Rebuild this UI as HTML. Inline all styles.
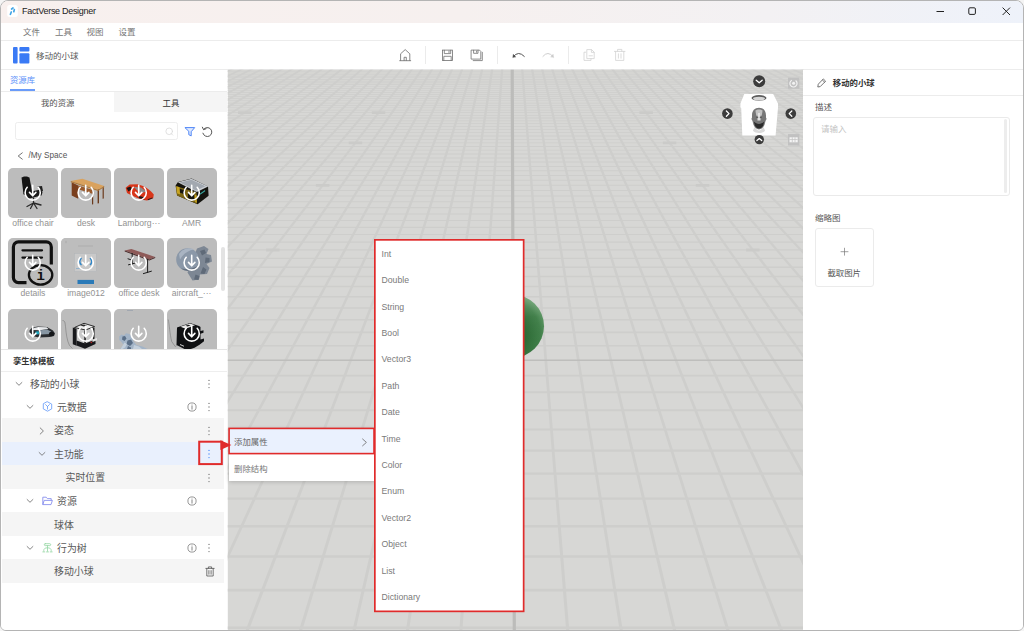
<!DOCTYPE html>
<html lang="zh-CN">
<head>
<meta charset="utf-8">
<title>FactVerse Designer</title>
<style>
html,body{margin:0;padding:0;}
body{width:1024px;height:631px;overflow:hidden;background:#f4f4f4;font-family:"Liberation Sans","Noto Sans CJK SC",sans-serif;color:#555;}
#win{position:absolute;left:0;top:0;width:1024px;height:631px;box-sizing:border-box;border:1px solid #b4b4b4;border-radius:8px 8px 6px 6px;background:#fff;overflow:hidden;}
#app{position:absolute;left:-1px;top:-1px;width:1024px;height:631px;}
.abs{position:absolute;}
.t{position:absolute;white-space:nowrap;line-height:1;}
svg{position:absolute;overflow:visible;}
/* title bar */
#titlebar{left:0;top:0;width:1024px;height:23px;background:linear-gradient(90deg,#f8f0ee 0%,#f6f0ef 45%,#f3f1f3 75%,#eef2fa 100%);}
#title{left:22px;top:7.300px;font-size:9px;color:#222;letter-spacing:-0.300px;}
/* menu */
#menubar{left:0;top:23px;width:1024px;height:17px;background:#fff;border-bottom:1px solid #ececec;}
.menu{top:28px;font-size:8.5px;color:#767676;}
/* toolbar */
#toolbar{left:0;top:41px;width:1024px;height:28px;background:#fff;border-bottom:1px solid #ececec;}
.sep{position:absolute;top:46px;width:1px;height:18px;background:#ebebeb;}
/* left */
#left{left:0;top:70px;width:227px;height:561px;background:#fff;}
.hline{position:absolute;height:1px;background:#ececec;}
.thumb{position:absolute;width:50px;height:50px;border-radius:5px;background:#bcbcbc;overflow:hidden;}
.thumb svg{left:0;top:0;}
.lab{position:absolute;width:60px;text-align:center;font-size:8.6px;color:#929292;line-height:10px;white-space:nowrap;}
.row{position:absolute;left:2px;width:222px;height:23.5px;}
.row.g{background:#f5f5f5;}
.row.b{background:#e9f0fd;}
.tt{position:absolute;font-size:9.9px;color:#595959;line-height:12px;white-space:nowrap;}
/* right */
#right{left:803px;top:70px;width:221px;height:561px;background:#fff;}
/* menus */
.mi{position:absolute;left:381.5px;font-size:8.7px;color:#7a7a7a;line-height:10px;white-space:nowrap;}
</style>
</head>
<body>
<div id="win"><div id="app">

<!-- title bar -->
<div id="titlebar" class="abs"></div>
<svg style="left:7px;top:5px" width="12" height="13" viewBox="0 0 12 13"><rect x="0.200" y="0" width="10.600" height="12" rx="2.500" fill="#fff"/><path d="M3.400 9.300l.9-2.300M4.600 4l1.400-1M7.300 4.600l-.5 2.100" stroke="#44a6e6" stroke-width="1.700" stroke-linecap="round" fill="none"/></svg>
<div id="title" class="t">FactVerse Designer</div>
<svg style="left:936px;top:6px" width="80" height="12" viewBox="0 0 80 12"><path d="M0.5 5.5h7.5" stroke="#222" stroke-width="1" fill="none"/><rect x="32.8" y="1.8" width="6.6" height="6.6" rx="1.2" stroke="#222" stroke-width="1" fill="none"/><path d="M66.6 1.6l7.4 7.4M74 1.6l-7.4 7.4" stroke="#222" stroke-width="1" fill="none"/></svg>

<!-- menu bar -->
<div id="menubar" class="abs"></div>
<div class="t menu" style="left:23px">文件</div>
<div class="t menu" style="left:55px">工具</div>
<div class="t menu" style="left:86.5px">视图</div>
<div class="t menu" style="left:118.5px">设置</div>

<!-- toolbar -->
<div id="toolbar" class="abs"></div>
<svg style="left:13px;top:46.5px" width="17" height="17" viewBox="0 0 17 17"><rect x="0" y="0" width="4.6" height="16.5" rx="1" fill="#3a7af5"/><rect x="6.4" y="0" width="10" height="4.4" rx="1" fill="#3a7af5"/><rect x="6.4" y="6.2" width="10" height="10.3" rx="1" fill="#3a7af5"/></svg>
<div class="t" style="left:36px;top:51.6px;font-size:8.5px;color:#5a5a5a">移动的小球</div>
<div class="sep" style="left:425px"></div>
<div class="sep" style="left:496.5px"></div>
<div class="sep" style="left:567.5px"></div>
<svg style="left:398px;top:48px" width="232" height="14" viewBox="0 0 232 14" fill="none" stroke-linecap="round" stroke-linejoin="round">
<!-- home -->
<g stroke="#6a6a6a" stroke-width="0.8"><path d="M2.600 12.400V5.800L7.200 1.600l4.600 4.200v6.600M1.700 12.700h11M6.100 12.400V9.300h2.200v3.100"/></g>
<!-- save -->
<g stroke="#707070" stroke-width="0.8" stroke-linejoin="miter"><rect x="44.500" y="2.100" width="10" height="10.400"/><path d="M46.300 2.300v3.300h6.400V2.300M51 3v1.600M45.800 12.400V8.300h7.400v4.100"/></g>
<!-- save as -->
<g stroke="#707070" stroke-width="0.8" stroke-linejoin="miter"><path d="M73.500 2.100h8l1.300 1.300v7.700h-9.300z"/><path d="M75.600 2.300v3h4.400v-3M78.600 3v1.300M75.200 12.600h9.100V4.300" /></g>
<!-- undo -->
<g stroke="#4a4a4a" stroke-width="0.95"><path d="M115.400 8.600Q120.400 2.200 126.300 8.400"/><path d="M114.800 9.300l.5-3 2.300 2.500z" fill="#4a4a4a" stroke-width="0.400"/></g>
<!-- redo -->
<g stroke="#cbcbcb" stroke-width="0.95"><path d="M155 8.600Q150 2.200 144.900 8.400"/><path d="M155.600 9.300l-.5-3-2.300 2.500z" fill="#cbcbcb" stroke-width="0.400"/></g>
<!-- copy -->
<g stroke="#d2d2d2" stroke-width="0.8"><path d="M189.200 1.600h4.400l2.600 2.600v6.400h-7z"/><path d="M193.400 1.800v2.600h2.600"/><path d="M187.800 4.200h-1.800v8.200h7v-1.600"/><path d="M191 7.800h3.400"/></g>
<!-- trash -->
<g stroke="#d2d2d2" stroke-width="0.8"><path d="M216.400 3.400h10.600M219.600 3.200V1.400h4.200v1.800M217.600 3.600v8.800h8.200V3.600M220.400 5.800v4.400M223 5.800v4.400"/></g>
</svg>


<!-- viewport -->
<svg style="left:0;top:0" width="1024" height="631" viewBox="0 0 1024 631">
<defs>
<clipPath id="vp"><rect x="227.800" y="69.700" width="575.500" height="562"/></clipPath>
<radialGradient id="sph" cx="0.40" cy="0.62" r="0.66"><stop offset="0" stop-color="#1f5a29"/><stop offset="0.5" stop-color="#2b6a34"/><stop offset="0.82" stop-color="#3c7c45"/><stop offset="1" stop-color="#5a9561"/></radialGradient><linearGradient id="sph2" x1="0" y1="0" x2="0" y2="1"><stop offset="0" stop-color="#fff" stop-opacity="0.22"/><stop offset="0.35" stop-color="#fff" stop-opacity="0.04"/><stop offset="1" stop-color="#fff" stop-opacity="0"/></linearGradient>
</defs>
<g clip-path="url(#vp)">
<rect x="227" y="69" width="577" height="563" fill="#d7d7d5"/>
<path d="M227 626.4h577v2.7h-577zM227 588.8h577v2.7h-577zM227 555.2h577v2.6h-577zM227 524.9h577v2.5h-577zM227 497.4h577v2.4h-577zM227 472.4h577v2.3h-577zM227 449.5h577v2.2h-577zM227 428.5h577v2.1h-577zM227 409.2h577v2h-577zM227 391.3h577v1.9h-577zM227 374.7h577v1.8h-577zM227 344.9h577v1.7h-577zM227 331.5h577v1.7h-577zM227 319h577v1.6h-577zM227 307.2h577v1.6h-577zM227 296.1h577v1.5h-577zM227 285.7h577v1.5h-577zM227 275.8h577v1.4h-577zM227 266.5h577v1.4h-577zM227 257.7h577v1.3h-577zM227 249.3h577v1.3h-577zM227 241.4h577v1.3h-577zM227 233.9h577v1.2h-577zM227 226.7h577v1.2h-577zM227 219.9h577v1.2h-577zM227 213.4h577v1.2h-577zM227 207.1h577v1.1h-577zM227 201.2h577v1.1h-577zM227 195.5h577v1.1h-577zM227 190h577v1.1h-577zM227 184.8h577v1h-577zM227 179.8h577v1h-577zM227 175h577v1h-577zM227 170.3h577v1h-577zM227 165.9h577v1h-577zM227 161.6h577v0.9h-577zM227 157.5h577v0.9h-577zM227 153.5h577v0.9h-577zM227 149.7h577v0.9h-577zM227 146h577v0.9h-577zM227 142.4h577v0.9h-577zM227 138.9h577v0.8h-577zM227 135.6h577v0.8h-577zM227 132.3h577v0.8h-577zM227 129.2h577v0.8h-577zM227 126.2h577v0.8h-577zM227 123.2h577v0.8h-577zM227 120.4h577v0.8h-577zM227 117.6h577v0.8h-577zM227 115h577v0.7h-577zM227 112.3h577v0.7h-577zM227 109.8h577v0.7h-577zM227 107.4h577v0.7h-577zM227 105h577v0.7h-577zM227 102.7h577v0.7h-577zM227 100.4h577v0.7h-577zM227 98.2h577v0.7h-577zM227 96.1h577v0.7h-577zM227 94h577v0.7h-577zM227 92h577v0.7h-577zM227 90h577v0.6h-577zM227 88.1h577v0.6h-577zM227 86.2h577v0.6h-577zM227 84.3h577v0.6h-577zM227 82.6h577v0.6h-577zM227 80.8h577v0.6h-577zM227 79.1h577v0.6h-577zM227 77.4h577v0.6h-577zM227 75.8h577v0.6h-577zM227 74.2h577v0.6h-577zM227 72.7h577v0.6h-577zM227 71.2h577v0.6h-577zM227 69.7h577v0.6h-577zM227 68.2h577v0.6h-577z" fill="#cececc"/>
<path d="M230.4 69L234.2 69L-982.6 632L-987.8 632zM240.4 69L244.2 69L-929.1 632L-934.2 632zM250.4 69L254.1 69L-875.6 632L-880.6 632zM260.5 69L264.1 69L-822.1 632L-827 632zM270.5 69L274.1 69L-768.6 632L-773.4 632zM280.5 69L284 69L-715.1 632L-719.8 632zM290.5 69L294 69L-661.6 632L-666.2 632zM300.6 69L304 69L-608.1 632L-612.6 632zM310.6 69L313.9 69L-554.6 632L-559 632zM320.6 69L323.9 69L-501.1 632L-505.4 632zM330.7 69L333.8 69L-447.5 632L-451.8 632zM340.7 69L343.8 69L-394 632L-398.2 632zM350.7 69L353.8 69L-340.5 632L-344.6 632zM360.8 69L363.7 69L-287 632L-291 632zM370.8 69L373.7 69L-233.5 632L-237.4 632zM380.8 69L383.7 69L-180 632L-183.8 632zM390.9 69L393.6 69L-126.5 632L-130.2 632zM400.9 69L403.6 69L-73 632L-76.6 632zM410.9 69L413.5 69L-19.5 632L-23 632zM420.9 69L423.5 69L34.1 632L30.6 632zM431 69L433.5 69L87.6 632L84.2 632zM441 69L443.5 69L141.1 632L137.8 632zM451 69L453.4 69L194.6 632L191.4 632zM461 69L463.4 69L248.2 632L244.9 632zM471 69L473.4 69L301.7 632L298.5 632zM481 69L483.4 69L355.2 632L352.1 632zM491 69L493.4 69L408.8 632L405.7 632zM501 69L503.3 69L462.3 632L459.2 632zM521 69L523.3 69L569.4 632L566.3 632zM531 69L533.3 69L623 632L619.9 632zM541 69L543.3 69L676.6 632L673.4 632zM551 69L553.4 69L730.1 632L727 632zM561 69L563.4 69L783.7 632L780.5 632zM570.9 69L573.4 69L837.3 632L834 632zM580.9 69L583.4 69L890.9 632L887.5 632zM590.9 69L593.4 69L944.5 632L941.1 632zM600.9 69L603.4 69L998.1 632L994.6 632zM610.8 69L613.5 69L1051.7 632L1048.1 632zM620.8 69L623.5 69L1105.3 632L1101.6 632zM630.8 69L633.5 69L1158.9 632L1155.1 632zM640.7 69L643.6 69L1212.5 632L1208.6 632zM650.7 69L653.6 69L1266.1 632L1262.2 632zM660.6 69L663.6 69L1319.7 632L1315.7 632zM670.6 69L673.6 69L1373.3 632L1369.2 632zM680.6 69L683.7 69L1426.9 632L1422.7 632zM690.5 69L693.7 69L1480.5 632L1476.2 632zM700.5 69L703.7 69L1534.1 632L1529.7 632zM710.5 69L713.8 69L1587.7 632L1583.2 632zM720.4 69L723.8 69L1641.3 632L1636.7 632zM730.4 69L733.8 69L1694.9 632L1690.2 632zM740.3 69L743.9 69L1748.5 632L1743.7 632zM750.3 69L753.9 69L1802.1 632L1797.2 632zM760.3 69L763.9 69L1855.7 632L1850.8 632zM770.2 69L774 69L1909.3 632L1904.3 632zM780.2 69L784 69L1962.9 632L1957.8 632zM790.1 69L794 69L2016.5 632L2011.3 632zM800.1 69L804 69L2070.1 632L2064.8 632z" fill="#cececc"/>
<path d="M238 111.3h13.500v2.800h-13.500zM266.1 248.6h13.500v2.800h-13.500zM315.9 183.9h13.500v2.800h-13.500zM348.7 141.4h13.500v2.800h-13.500zM371.8 111.3h13.500v2.800h-13.500zM746.1 248.6h13.500v2.800h-13.500zM695.8 183.9h13.500v2.800h-13.500zM662.8 141.4h13.500v2.800h-13.500zM639.4 111.3h13.500v2.800h-13.500zM773.2 111.3h13.500v2.800h-13.500z" fill="#cbcbc9"/>
<path d="M227 360.2H804" stroke="#bebebc" stroke-width="1.6" fill="none"/>
<path d="M512.2 69L514.3 632" stroke="#bcbcba" stroke-width="3.2" fill="none"/>
<circle cx="512.4" cy="326.200" r="31.600" fill="url(#sph)"/><circle cx="512.4" cy="326.200" r="31.600" fill="url(#sph2)"/>
</g>
</svg>
<svg style="left:715px;top:68px" width="95" height="84" viewBox="715 68 95 84">
<polygon points="740.4,103.500 744.300,94 773.200,94 778,103.500 778,108 775.600,135.500 742.300,135.500 741.200,108 740.400,107.500" fill="#fff"/>
<ellipse cx="759" cy="97.900" rx="7.500" ry="2.800" fill="#5c5c5c"/>
<ellipse cx="759" cy="98.600" rx="6" ry="1.900" fill="#d6d6d6"/>
<path d="M754.500 127c1.500 2.400 3 3.400 4.500 3.400s3-1 4.500-3.400l1.600 3.800c-1.500 1.600-3.600 2.200-6.100 2.200s-4.600-.6-6.100-2.200z" fill="#dadada"/>
<path d="M759 107.800c4.400 0 7 3 7 7.600v2.400c.7.200.7 2.200-.4 3l-1 3.800c-.8 2.600-3 4.800-5.600 4.800s-4.800-2.200-5.600-4.800l-1-3.800c-1.100-.8-1.100-2.800-.4-3v-2.400c0-4.600 2.600-7.600 7-7.600z" fill="#777"/>
<path d="M755.400 110.600c1.600-1.500 5.600-1.500 7.200 0l-.9 5.200h-5.400z" fill="#c2c2c2"/>
<path d="M758 113h2l.6 7.600h-3.200z" fill="#e2e2e2"/>
<path d="M753.800 121.600c1.500 1.500 3.400 2.300 5.200 2.300s3.700-.8 5.200-2.300l-1 3.900c-1 1.800-2.500 3-4.200 3s-3.200-1.200-4.200-3z" fill="#2c2c2c"/>
<path d="M756.400 117.400h1.800M759.800 117.400h1.800" stroke="#3a3a3a" stroke-width="0.700"/>
<g fill="#3c3c3c"><circle cx="759.200" cy="81.300" r="6"/><circle cx="727.400" cy="113.600" r="5.300"/><circle cx="790.800" cy="113.600" r="5.300"/><circle cx="759.300" cy="139.600" r="4.700"/></g>
<g fill="none" stroke="#fff" stroke-width="1.300" stroke-linecap="round" stroke-linejoin="round"><path d="M756.200 80.200l3 2.600 3-2.600"/><path d="M726.400 111l2.600 2.600-2.600 2.600"/><path d="M791.800 111l-2.600 2.600 2.600 2.600"/><path d="M756.900 140.600l2.400-2 2.400 2"/></g>
<rect x="788" y="77.700" width="11.300" height="11" fill="#c1c1c1"/>
<g fill="none" stroke="#f2f2f2" stroke-width="1.200"><path d="M795.600 80.500a3.600 3.600 0 1 1 -3.800-.3"/></g><circle cx="793.600" cy="83.300" r="1.500" fill="#f2f2f2"/>
<rect x="788" y="134.100" width="11.300" height="11.400" fill="#c1c1c1"/>
<rect x="789.500" y="137.300" width="8.200" height="5" fill="#f4f4f4"/>
<path d="M792.300 137.300v5M795 137.300v5M789.500 139.500h8.200" stroke="#c1c1c1" stroke-width="0.700" fill="none"/>
</svg>


<!-- left panel -->
<div id="left" class="abs"></div>
<div class="t" style="left:10px;top:75.500px;font-size:8.400px;color:#5b8ff9">资源库</div>
<div class="abs" style="left:10px;top:89px;width:25.200px;height:1.500px;background:#6a9bf9"></div>
<div class="hline" style="left:0;top:91px;width:227px"></div>
<div class="abs" style="left:114px;top:92px;width:113px;height:20px;background:#f5f5f5"></div>
<div class="t" style="left:41px;top:99.300px;font-size:8.400px;color:#555">我的资源</div>
<div class="t" style="left:162.600px;top:99.300px;font-size:8.400px;color:#333">工具</div>
<div class="abs" style="left:14.800px;top:121.800px;width:161px;height:16px;border:1px solid #ededed;border-radius:2.500px;box-sizing:content-box"></div>
<svg style="left:164px;top:126px" width="50" height="12" viewBox="164 126 50 12" fill="none" stroke-linecap="round" stroke-linejoin="round"><g stroke="#d9d9d9" stroke-width="0.800"><circle cx="169.200" cy="131.300" r="3.300"/><path d="M171.200 133.600l1.500 1.500"/></g><path d="M185.300 127.600h9.400l-3.500 4.100v4.200l-2.400-1.200v-3z" stroke="#4f86f7" stroke-width="1" fill="#dfe9fe"/><path d="M203.600 129.400a4.500 4.500 0 1 1 -0.700 3.800M202.400 127.200l1.100 2.400 2.500-0.800" stroke="#555" stroke-width="1"/></svg>
<svg style="left:17px;top:150.500px" width="8" height="10" viewBox="0 0 8 10" fill="none"><path d="M5.600 1.600L1.200 5l4.400 3.400" stroke="#666" stroke-width="0.900"/></svg>
<div class="t" style="left:28.500px;top:151.600px;font-size:8.200px;color:#555">/My Space</div>
<div class="thumb" style="left:8px;top:168px;height:50px;border-radius:5px"><svg width="50" height="50" viewBox="0 0 50 50"><path d="M13.500 9.500c2-1.500 6-1.500 8 0l2.600 14-1.600 2.500-7 .5z" fill="#141414"/><path d="M15.500 25l15-3c2 0 3.500 1 4 2.500l-1 3-14 3.500z" fill="#1a1a1a"/><path d="M29.500 18.500l4.500-.5 1 5-2 1z" fill="#222"/><path d="M25.500 30v5M25.500 35l-6.500 3.500M25.500 35l7.500 2M25.500 35l-3 5.500M25.500 35l3.500 5.500" stroke="#2a2a2a" stroke-width="1.300" fill="none" stroke-linecap="round"/><g fill="none" stroke="#fff" stroke-width="1.600" stroke-linecap="round" stroke-linejoin="round"><path d="M19.200 19.300a7.600 7.600 0 1 0 11 0"/><path d="M24.700 17.400v10.200M21.500 24.400l3.200 3.400 3.200-3.400"/></g></svg></div>
<div class="lab" style="left:3px;top:218px">office chair</div>
<div class="thumb" style="left:61px;top:168px;height:50px;border-radius:5px"><svg width="50" height="50" viewBox="0 0 50 50"><path d="M9.800 13l11.600-2.300 21.800 7.300-6.200 3.800z" fill="#d9a25e"/><path d="M10.700 14.200l6.500 3.200v13.400l-6.500-3.400z" fill="#7a3f1e"/><path d="M17.200 17.400l14 4.400v4l-14-4.600z" fill="#9a5a2c"/><path d="M36.600 21.800l1.400-.6v14l-1.400.4zM41.600 19.200l1.200-.6v11.800l-1.200.4zM31 22v14.600l1.200-.4V22.400z" fill="#6b3a1c"/><path d="M9.800 13l27.200 8.800 6.200-3.800v1.200l-6.200 3.800-27.200-8.800z" fill="#b07a3c"/><g fill="none" stroke="#fff" stroke-width="1.600" stroke-linecap="round" stroke-linejoin="round"><path d="M19.200 19.300a7.600 7.600 0 1 0 11 0"/><path d="M24.700 17.400v10.200M21.500 24.400l3.200 3.400 3.200-3.400"/></g></svg></div>
<div class="lab" style="left:56px;top:218px">desk</div>
<div class="thumb" style="left:114px;top:168px;height:50px;border-radius:5px"><svg width="50" height="50" viewBox="0 0 50 50"><path d="M11.600 19.800L15.600 16.600 23.500 16.200C30 17.600 36 21.500 39.800 26.400L39.200 30.200 33 32.600C27 32 20 29 13 25z" fill="#d8361a"/><path d="M19.500 18.800l7.500.6 5.200 4.200-5.800 1.800z" fill="#8c8c8c"/><path d="M12.500 20l3.800-1.600 1.800 2.400-3.600 2.600zM23.500 27.600l5.800 1.400 1.400 2.400-5.400-1.200z" fill="#1d1414"/><path d="M33.500 31.200l4.800-1.800.5.900-4.700 2z" fill="#2a1a1a"/><g fill="none" stroke="#fff" stroke-width="1.600" stroke-linecap="round" stroke-linejoin="round"><path d="M19.200 19.300a7.600 7.600 0 1 0 11 0"/><path d="M24.700 17.400v10.200M21.500 24.400l3.200 3.400 3.200-3.400"/></g></svg></div>
<div class="lab" style="left:109px;top:218px">Lamborg···</div>
<div class="thumb" style="left:166.6px;top:168px;height:50px;border-radius:5px"><svg width="50" height="50" viewBox="0 0 50 50"><path d="M8.600 17.600l2.400-3.600 13.600-3.400 16.400 7.800.6 9.400-11 8.400-20.400-8.600z" fill="#15140f"/><path d="M8.800 18l20.800 6.600.4 11.200-20-8.400z" fill="#7a6414"/><path d="M12 20.500l6 2v4l-6-2.200zM21 25l6 2v5.500l-6-2.500z" fill="#17160f"/><path d="M9.400 18.300l3.200 1 .5 7.300-3.200-1.300zM28 26.800l1.600.6.300 7.400-1.800-.8z" fill="#c7a422"/><path d="M10.800 14.200l13.800-3.400 16.600 7.800-11.400 5.400z" fill="#c9cdd2"/><path d="M13 14.400l11.400-2.700 14 6.600-9.400 4.300z" fill="#a2a8b0"/><path d="M33 25.500l5-3.400.2 1.200-5 3.500z" fill="#3aa7a0"/><g fill="none" stroke="#fff" stroke-width="1.600" stroke-linecap="round" stroke-linejoin="round"><path d="M19.200 19.300a7.600 7.600 0 1 0 11 0"/><path d="M24.700 17.400v10.200M21.500 24.400l3.200 3.400 3.200-3.400"/></g></svg></div>
<div class="lab" style="left:161.6px;top:218px">AMR</div>
<div class="thumb" style="left:8px;top:238px;height:50px;border-radius:5px"><svg width="50" height="50" viewBox="0 0 50 50"><path d="M18.500 44.600H10.400a5 5 0 0 1 -5-5V8.900a5 5 0 0 1 5-5H38.300a5 5 0 0 1 5 5V26.500" fill="none" stroke="#111" stroke-width="3.200" stroke-linecap="butt"/><path d="M14.500 12.300h19.500M14.500 19.600h19.500" stroke="#111" stroke-width="2.300" stroke-linecap="round"/><ellipse cx="32.600" cy="36.900" rx="11.700" ry="9.700" fill="#bcbcbc" stroke="#111" stroke-width="2.300"/><text x="32.600" y="42" text-anchor="middle" font-family="Liberation Mono, monospace" font-weight="700" font-size="14" fill="#111">i</text><g fill="none" stroke="#fff" stroke-width="1.600" stroke-linecap="round" stroke-linejoin="round"><path d="M19.200 19.300a7.600 7.600 0 1 0 11 0"/><path d="M24.700 17.400v10.200M21.500 24.400l3.200 3.400 3.200-3.400"/></g></svg></div>
<div class="lab" style="left:3px;top:288.3px">details</div>
<div class="thumb" style="left:61px;top:238px;height:50px;border-radius:5px"><svg width="50" height="50" viewBox="0 0 50 50"><rect x="0" y="0" width="50" height="50" fill="#bdbdbd"/><rect x="13.600" y="15.600" width="21.600" height="17.800" fill="#c9c9c9" stroke="#b0b4b8" stroke-width="0.400"/><path d="M20.500 20c-2.200 2-2.400 5 0 7M29 20c2.200 2 2.400 5 0 7" stroke="#2f86c8" stroke-width="1.400" fill="none"/><rect x="16.500" y="41.900" width="16.500" height="4.100" fill="#2a7ab8"/><rect x="17" y="7.600" width="15" height="0.800" fill="#aaa"/><rect x="4.500" y="2.800" width="1" height="2.400" fill="#aaa"/><rect x="15" y="30" width="5" height="0.700" fill="#7aa6cc"/><g fill="none" stroke="#fff" stroke-width="1.600" stroke-linecap="round" stroke-linejoin="round"><path d="M19.200 19.300a7.600 7.600 0 1 0 11 0"/><path d="M24.700 17.400v10.200M21.500 24.400l3.200 3.400 3.200-3.400"/></g></svg></div>
<div class="lab" style="left:56px;top:288.3px">image012</div>
<div class="thumb" style="left:114px;top:238px;height:50px;border-radius:5px"><svg width="50" height="50" viewBox="0 0 50 50"><path d="M10.700 12.400l6.700-1.500 23.800 8-5.900 2.500z" fill="#8e5a58"/><path d="M10.700 12.400l24.600 9 5.900-2.500v1.100l-5.900 2.600-24.600-9z" fill="#4a2a2a"/><path d="M18.200 15.400v10.800M33.600 21.200v13.200M14.500 26.800l7 -1.800M29.400 35.600l8-2.400M17.600 22l-3.600-1.200" stroke="#1d1d1d" stroke-width="1" fill="none" stroke-linecap="round"/><g fill="none" stroke="#fff" stroke-width="1.600" stroke-linecap="round" stroke-linejoin="round"><path d="M19.200 19.300a7.600 7.600 0 1 0 11 0"/><path d="M24.700 17.400v10.200M21.500 24.400l3.200 3.400 3.200-3.400"/></g></svg></div>
<div class="lab" style="left:109px;top:288.3px">office desk</div>
<div class="thumb" style="left:166.6px;top:238px;height:50px;border-radius:5px"><svg width="50" height="50" viewBox="0 0 50 50"><path d="M30 10.500l7-2.500 4.500 3-2 5 4.500 1 1 6.500-5.500 2.500 3 4-2.500 6-7 .5-1 5-6.500 1-5-8z" fill="#7d8794"/><path d="M33 13l4.500-1.500 1.500 3.500-4 2.500zM38.500 19.500l4 .5v4l-4.500 1zM36 29l3.500 2.500-2 4.500-4-.5zM28.500 36.500l4 1.500-1 4-4.500-.5z" fill="#5f6a78"/><circle cx="20.500" cy="21.500" r="11.300" fill="#8b98a8"/><path d="M12 16a11.300 11.300 0 0 1 15-4.500c-6 1-11 4.500-14 10z" fill="#a9b4c2"/><path d="M14 30.500a11.300 11.300 0 0 0 16-2c-5 2.500-11 3-16 2z" fill="#66717f"/><g fill="none" stroke="#fff" stroke-width="1.600" stroke-linecap="round" stroke-linejoin="round"><path d="M19.200 19.300a7.600 7.600 0 1 0 11 0"/><path d="M24.700 17.400v10.200M21.500 24.400l3.200 3.400 3.200-3.400"/></g></svg></div>
<div class="lab" style="left:161.6px;top:288.3px">aircraft_···</div>
<div class="thumb" style="left:8px;top:309px;height:40px;border-radius:5px 5px 0 0"><svg width="50" height="50" viewBox="0 0 50 50"><path d="M21.500 21.500l2.500-3 6-1 9 .5 6 3.500 2 3-1 2.500-4 1-11 .5-7-1.500-2.500-3z" fill="#2a2d31"/><path d="M25.500 19l5-1 8 .3 2 1.700-9 1.200-6.500-.2z" fill="#e6e8ea"/><path d="M31 21.500l8-1 4 2-1 2.500-9 .5z" fill="#8796a3"/><path d="M27.500 22.500l3.500-.3.300 3-3.500.2z" fill="#1fa6bd"/><ellipse cx="43.500" cy="25" rx="2.600" ry="2.200" fill="#15171a"/><ellipse cx="24.500" cy="24.500" rx="2" ry="2.200" fill="#1a1c1f"/><g fill="none" stroke="#fff" stroke-width="1.600" stroke-linecap="round" stroke-linejoin="round"><path d="M19.200 19.300a7.600 7.600 0 1 0 11 0"/><path d="M24.700 17.400v10.200M21.500 24.400l3.200 3.400 3.200-3.400"/></g></svg></div>
<div class="thumb" style="left:61px;top:309px;height:40px;border-radius:5px 5px 0 0"><svg width="50" height="50" viewBox="0 0 50 50"><path d="M1.500 11.500c2.500.2 2.500 2 3 6 .6 7 1.500 14 4 19l3 3" fill="none" stroke="#6f6f6f" stroke-width="0.500"/><path d="M13 19l10-4.300 10 3v13.300l-9.500 4-10.500-3.500z" fill="#c9c9c9"/><path d="M13.500 18.500l9.500-4.200 10.500 3.200-9 3.500z" fill="#ececec" stroke="#1a1a1a" stroke-width="0.900"/><path d="M19 16.200l4-.8 3 1-3.500 1.200z" fill="#2a2a2a"/><path d="M11.800 18.600l3.800 1.200v17l-3.800-1.500z" fill="#17181b"/><path d="M15.600 31.500l8.400 3 10.500-4v4.500l-10.500 4.800-8.400-3.300z" fill="#17181b"/><path d="M23.300 21.500h1.500v14h-1.500zM32 18.500h1.500v13H32z" fill="#1c1c1c"/><path d="M31.500 30.500l4.500-1.600v2.400l-4.500 1.600z" fill="#e2e2e2"/><circle cx="30.300" cy="33.300" r="0.900" fill="#b02a2a"/><g fill="none" stroke="#fff" stroke-width="1.600" stroke-linecap="round" stroke-linejoin="round"><path d="M19.200 19.300a7.600 7.600 0 1 0 11 0"/><path d="M24.700 17.400v10.200M21.500 24.400l3.200 3.400 3.200-3.400"/></g></svg></div>
<div class="thumb" style="left:114px;top:309px;height:40px;border-radius:5px 5px 0 0"><svg width="50" height="50" viewBox="0 0 50 50"><path d="M5.200 27.500l2.300-2 2.500 1 2-2.200 3.500.7 2.500 3 1.500 4.500 3 3.500 6 1.500 5 2.500H6l3.500-4-2-3-2.300-2z" fill="#a3b4c7"/><path d="M8.500 27.500l2.500-.5 1.500 2.500-2 2.500-2.500-1.500zM13.500 31.500l3.500-1 2 3.500-3 3-3.500-2zM14 37l3 1.500v1.500h-4z" fill="#5b6f87"/><path d="M10.500 33.500l2.500 1.500-2 3.500-2.500 1.500h-2zM20 36l5 1.500 3 2.500h-9z" fill="#c4d0dc"/><rect x="13" y="1.200" width="6" height="0.600" fill="#8f9aa8"/><g fill="none" stroke="#fff" stroke-width="1.600" stroke-linecap="round" stroke-linejoin="round"><path d="M19.200 19.300a7.600 7.600 0 1 0 11 0"/><path d="M24.700 17.400v10.200M21.500 24.400l3.200 3.400 3.200-3.400"/></g></svg></div>
<div class="thumb" style="left:166.6px;top:309px;height:40px;border-radius:5px 5px 0 0"><svg width="50" height="50" viewBox="0 0 50 50"><path d="M1.200 10.500c1.200 5 1.500 14 3.500 22l3.500 5 1.500-1" fill="none" stroke="#6f6f6f" stroke-width="0.500"/><path d="M10 18.500l13-4.600 9 3.100 1.500 1v4l3-.8v2.600l-3 .9v5.800l3.500-1v2.800l-4.500 3.500-5 3-7.500 2.500-10.500-5.300z" fill="#0f1012"/><path d="M13.500 17.800l9.500-3.300 5 1.700-9.500 3.500z" fill="#e9e9e9"/><path d="M18.500 16.800l3-1 2 .7-3 1.100z" fill="#1a1a1a"/><path d="M13 35l4 1.800v1l-4-1.800z" fill="#cfcfcf"/><g fill="none" stroke="#fff" stroke-width="1.600" stroke-linecap="round" stroke-linejoin="round"><path d="M19.200 19.300a7.600 7.600 0 1 0 11 0"/><path d="M24.700 17.400v10.200M21.500 24.400l3.200 3.400 3.200-3.400"/></g></svg></div>
<div class="abs" style="left:220.900px;top:247.200px;width:4px;height:44.300px;border-radius:2px;background:#e3e3e3"></div>
<div class="hline" style="left:0;top:349px;width:227px;background:#e6e6e6"></div>
<div class="t" style="left:13px;top:357px;font-size:8.300px;font-weight:700;color:#333">孪生体模板</div>
<div class="hline" style="left:0;top:370.500px;width:227px;background:#eeeeee"></div>
<div class="row g" style="top:418.00px"></div>
<div class="row b" style="top:441.50px"></div>
<div class="row g" style="top:465.00px"></div>
<div class="row g" style="top:512.00px"></div>
<div class="row g" style="top:559.00px"></div>
<svg style="left:14.6px;top:380.8px" width="8" height="6" viewBox="0 0 8 6" fill="none"><path d="M1.100 1.500L4 4.300l2.900-2.800" stroke="#666" stroke-width="0.800" stroke-linecap="round" stroke-linejoin="round"/></svg>
<div class="tt" style="left:30.0px;top:379.2px">移动的小球</div>
<svg style="left:207px;top:378.8px" width="4" height="10" viewBox="0 0 4 10"><g fill="#777"><circle cx="2" cy="1.400" r="0.700"/><circle cx="2" cy="5" r="0.700"/><circle cx="2" cy="8.600" r="0.700"/></g></svg>
<svg style="left:26.0px;top:404.2px" width="8" height="6" viewBox="0 0 8 6" fill="none"><path d="M1.100 1.500L4 4.300l2.900-2.800" stroke="#666" stroke-width="0.800" stroke-linecap="round" stroke-linejoin="round"/></svg>
<svg style="left:42px;top:400.8px" width="11" height="11" viewBox="0 0 11 11" fill="none" stroke="#5f97f9" stroke-width="0.800" stroke-linejoin="round" stroke-linecap="round"><path d="M5.500 0.800l4.200 2.300v4.800L5.500 10.200 1.300 7.900V3.100z"/><path d="M3.600 3.600l1.900 1.900 1.900-1.900M5.500 5.500v2.600"/></svg>
<div class="tt" style="left:57.0px;top:401.8px">元数据</div>
<svg style="left:186.500px;top:401.9px" width="10" height="10" viewBox="0 0 10 10" fill="none"><circle cx="5" cy="5" r="4.100" stroke="#5e5e5e" stroke-width="0.650"/><path d="M5 4.400v2.800" stroke="#5e5e5e" stroke-width="0.750" stroke-linecap="round"/><circle cx="5" cy="2.900" r="0.500" fill="#5e5e5e"/></svg>
<svg style="left:207px;top:402.2px" width="4" height="10" viewBox="0 0 4 10"><g fill="#777"><circle cx="2" cy="1.400" r="0.700"/><circle cx="2" cy="5" r="0.700"/><circle cx="2" cy="8.600" r="0.700"/></g></svg>
<svg style="left:39.0px;top:426.8px" width="6" height="8" viewBox="0 0 6 8" fill="none"><path d="M1.200 0.900L4.400 4 1.200 7.100" stroke="#666" stroke-width="0.800" stroke-linecap="round" stroke-linejoin="round"/></svg>
<div class="tt" style="left:54.0px;top:425.2px">姿态</div>
<svg style="left:207px;top:425.8px" width="4" height="10" viewBox="0 0 4 10"><g fill="#777"><circle cx="2" cy="1.400" r="0.700"/><circle cx="2" cy="5" r="0.700"/><circle cx="2" cy="8.600" r="0.700"/></g></svg>
<svg style="left:38.0px;top:451.2px" width="8" height="6" viewBox="0 0 8 6" fill="none"><path d="M1.100 1.500L4 4.300l2.900-2.800" stroke="#666" stroke-width="0.800" stroke-linecap="round" stroke-linejoin="round"/></svg>
<div class="tt" style="left:54.0px;top:448.8px">主功能</div>
<div class="tt" style="left:65.5px;top:472.2px">实时位置</div>
<svg style="left:207px;top:472.8px" width="4" height="10" viewBox="0 0 4 10"><g fill="#777"><circle cx="2" cy="1.400" r="0.700"/><circle cx="2" cy="5" r="0.700"/><circle cx="2" cy="8.600" r="0.700"/></g></svg>
<svg style="left:26.0px;top:498.2px" width="8" height="6" viewBox="0 0 8 6" fill="none"><path d="M1.100 1.500L4 4.300l2.900-2.800" stroke="#666" stroke-width="0.800" stroke-linecap="round" stroke-linejoin="round"/></svg>
<svg style="left:42px;top:496.2px" width="11" height="10" viewBox="0 0 11 10" fill="none" stroke="#7b83eb" stroke-width="0.800" stroke-linejoin="round"><path d="M0.800 8.600V1.200h3.400l1.200 1.400h3.800v1.800M0.800 8.600l1.400-4.200h8.200L9 8.600z"/></svg>
<div class="tt" style="left:57.0px;top:495.8px">资源</div>
<svg style="left:186.500px;top:495.9px" width="10" height="10" viewBox="0 0 10 10" fill="none"><circle cx="5" cy="5" r="4.100" stroke="#5e5e5e" stroke-width="0.650"/><path d="M5 4.400v2.800" stroke="#5e5e5e" stroke-width="0.750" stroke-linecap="round"/><circle cx="5" cy="2.900" r="0.500" fill="#5e5e5e"/></svg>
<div class="tt" style="left:54.0px;top:520.2px">球体</div>
<svg style="left:26.0px;top:545.2px" width="8" height="6" viewBox="0 0 8 6" fill="none"><path d="M1.100 1.500L4 4.300l2.900-2.800" stroke="#666" stroke-width="0.800" stroke-linecap="round" stroke-linejoin="round"/></svg>
<svg style="left:42px;top:543.2px" width="11" height="10" viewBox="0 0 11 10" fill="none" stroke="#93d6a2" stroke-width="0.800" stroke-linecap="round"><rect x="2.300" y="0.700" width="6.400" height="1.900" rx="0.950"/><path d="M5.500 2.700v5.500M1.800 8.200V7.300c0-1.500 1.200-2.500 3.700-2.500s3.700 1 3.700 2.500v.9M0.800 8.900h2M4.500 8.900h2M8.200 8.900h2"/></svg>
<div class="tt" style="left:57.0px;top:542.8px">行为树</div>
<svg style="left:186.500px;top:543.0px" width="10" height="10" viewBox="0 0 10 10" fill="none"><circle cx="5" cy="5" r="4.100" stroke="#5e5e5e" stroke-width="0.650"/><path d="M5 4.400v2.800" stroke="#5e5e5e" stroke-width="0.750" stroke-linecap="round"/><circle cx="5" cy="2.900" r="0.500" fill="#5e5e5e"/></svg>
<svg style="left:207px;top:543.2px" width="4" height="10" viewBox="0 0 4 10"><g fill="#777"><circle cx="2" cy="1.400" r="0.700"/><circle cx="2" cy="5" r="0.700"/><circle cx="2" cy="8.600" r="0.700"/></g></svg>
<div class="tt" style="left:54.0px;top:566.2px">移动小球</div>
<svg style="left:204.500px;top:566.2px" width="10" height="11" viewBox="0 0 10 11" fill="none" stroke="#555" stroke-width="0.800" stroke-linecap="round" stroke-linejoin="round"><path d="M0.800 2.400h8.400M3.400 2.200V0.900h3.200v1.300M1.800 2.600v7.400h6.400V2.600M3.900 4.600v3.600M6.100 4.600v3.600"/></svg>

<!-- right panel -->
<div id="right" class="abs"></div>
<svg style="left:817px;top:78px" width="10" height="10" viewBox="0 0 10 10" fill="none" stroke="#555" stroke-width="0.800" stroke-linejoin="round" stroke-linecap="round"><path d="M6.600 1.200l2 2-5.400 5.400-2.400.4.400-2.400zM5.600 2.200l2 2"/></svg>
<div class="t" style="left:832.800px;top:78.600px;font-size:8.400px;font-weight:700;color:#333">移动的小球</div>
<div class="hline" style="left:803px;top:95px;width:221px;background:#ececec"></div>
<div class="t" style="left:815px;top:102.800px;font-size:8.500px;color:#555">描述</div>
<div class="abs" style="left:813.200px;top:116.800px;width:195px;height:77px;border:1px solid #eaeaea;border-radius:3px"></div>
<div class="abs" style="left:1004px;top:119px;width:2.600px;height:74px;border-radius:1.500px;background:#ededed"></div>
<div class="t" style="left:821px;top:125px;font-size:8.500px;color:#c4c4c4">请输入</div>
<div class="t" style="left:815px;top:214.200px;font-size:8.500px;color:#555">缩略图</div>
<div class="abs" style="left:815px;top:228px;width:56.500px;height:56.500px;border:1px solid #ebebeb;border-radius:3px"></div>
<svg style="left:840px;top:247px" width="10" height="10" viewBox="0 0 10 10"><path d="M4.500 0.800v7.800M0.600 4.700h7.800" stroke="#777" stroke-width="0.700" fill="none"/></svg>
<div class="t" style="left:827.500px;top:269.400px;font-size:8.400px;color:#555">截取图片</div>


<!-- context menus -->
<svg style="left:0;top:0" width="1024" height="631" viewBox="0 0 1024 631"><rect x="199.200" y="441.700" width="22.600" height="22.400" fill="#e9f0fd" stroke="#e02b2b" stroke-width="2"/></svg>
<svg style="left:207px;top:449px" width="4" height="10" viewBox="0 0 4 10"><g fill="#4a8af8"><circle cx="2" cy="1.400" r="0.700"/><circle cx="2" cy="5" r="0.700"/><circle cx="2" cy="8.600" r="0.700"/></g></svg>
<div class="abs" style="left:228.500px;top:428px;width:146px;height:52.600px;background:#fff;box-shadow:0 1px 4px rgba(0,0,0,0.18)"></div>
<svg style="left:0;top:0" width="1024" height="631" viewBox="0 0 1024 631"><rect x="229.100" y="428.400" width="144.900" height="25.200" fill="#eaf1fe" stroke="#e02b2b" stroke-width="1.600"/></svg>
<div class="t" style="left:234.100px;top:438px;font-size:8.400px;color:#666">添加属性</div>
<svg style="left:361px;top:437.500px" width="7" height="9" viewBox="0 0 7 9" fill="none"><path d="M1.600 1l3.800 3.400L1.600 7.800" stroke="#666" stroke-width="0.800" stroke-linecap="round" stroke-linejoin="round"/></svg>
<div class="t" style="left:234.100px;top:464.600px;font-size:8.400px;color:#777">删除结构</div>
<svg style="left:220px;top:438px" width="14" height="16" viewBox="220 438 14 16"><path d="M220.400 440.300L231.400 445.100 220.400 449.900z" fill="#e02b2b"/></svg>
<svg style="left:0;top:0" width="1024" height="631" viewBox="0 0 1024 631"><rect x="374.850" y="239.850" width="148.800" height="371.500" fill="#fff" stroke="#e02b2b" stroke-width="1.700"/></svg>
<div class="mi" style="top:248.8px">Int</div>
<div class="mi" style="top:275.2px">Double</div>
<div class="mi" style="top:301.6px">String</div>
<div class="mi" style="top:328.0px">Bool</div>
<div class="mi" style="top:354.4px">Vector3</div>
<div class="mi" style="top:380.8px">Path</div>
<div class="mi" style="top:407.2px">Date</div>
<div class="mi" style="top:433.6px">Time</div>
<div class="mi" style="top:460.0px">Color</div>
<div class="mi" style="top:486.4px">Enum</div>
<div class="mi" style="top:512.8px">Vector2</div>
<div class="mi" style="top:539.2px">Object</div>
<div class="mi" style="top:565.6px">List</div>
<div class="mi" style="top:592.0px">Dictionary</div>

</div></div>
</body>
</html>
